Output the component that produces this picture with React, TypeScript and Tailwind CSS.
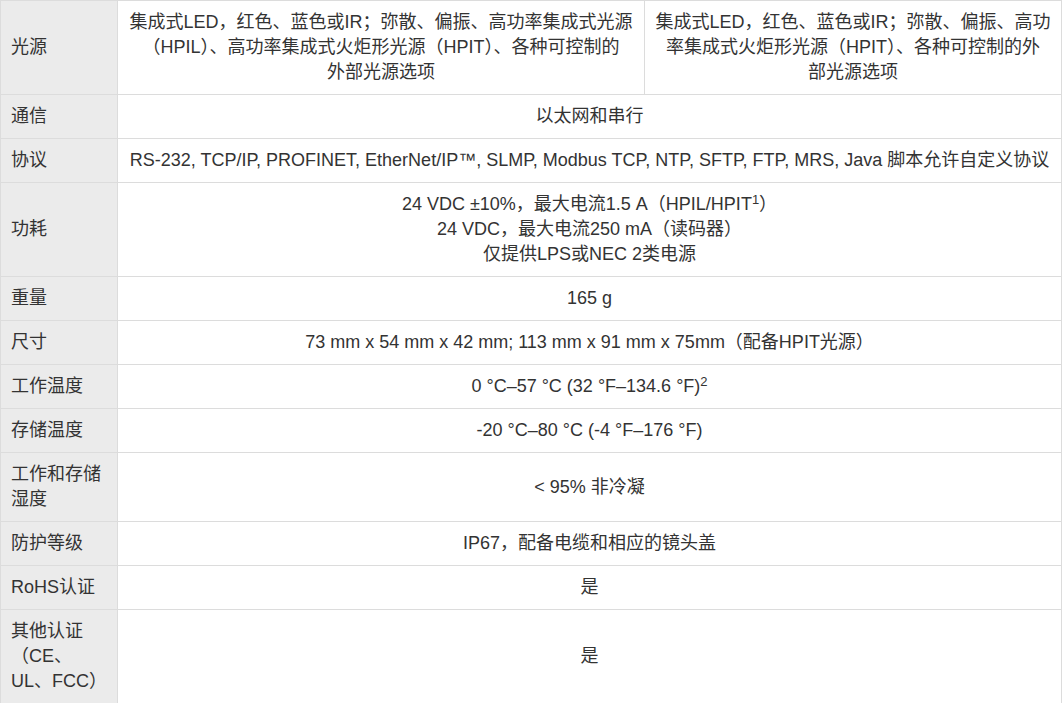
const ROWS: { label: React.ReactNode; value: React.ReactNode }[] = [
  { label: '通信', value: '以太网和串行' },
  {
    label: '协议',
    value: 'RS-232, TCP/IP, PROFINET, EtherNet/IP™, SLMP, Modbus TCP, NTP, SFTP, FTP, MRS, Java 脚本允许自定义协议',
  },
  {
    label: '功耗',
    value: (
      <>
        24 VDC ±10%，最大电流1.5 A（HPIL/HPIT<sup className="text-[13px]">1</sup>）
        <br />
        24 VDC，最大电流250 mA（读码器）
        <br />
        仅提供LPS或NEC 2类电源
      </>
    ),
  },
  { label: '重量', value: '165 g' },
  { label: '尺寸', value: '73 mm x 54 mm x 42 mm; 113 mm x 91 mm x 75mm（配备HPIT光源）' },
  {
    label: '工作温度',
    value: (
      <>
        0 °C–57 °C (32 °F–134.6 °F)<sup className="text-[13px]">2</sup>
      </>
    ),
  },
  { label: '存储温度', value: '-20 °C–80 °C (-4 °F–176 °F)' },
  {
    label: (
      <>
        工作和存储
        <br />
        湿度
      </>
    ),
    value: '< 95% 非冷凝',
  },
  { label: '防护等级', value: 'IP67，配备电缆和相应的镜头盖' },
  { label: 'RoHS认证', value: '是' },
  {
    label: (
      <>
        其他认证
        <br />
        （CE、
        <br />
        UL、FCC）
      </>
    ),
    value: '是',
  },
]

const labelCls = 'bg-[#ebebeb] border border-[#dcdcdc] px-[10px] py-[9px] text-left align-middle'
const valueCls = 'border border-[#dcdcdc] px-[10px] py-[9px] text-center align-middle'

export default function App() {
  return (
    <div
      className="w-[1062px] bg-white text-[18px] leading-[25px] text-[#333]"
      style={{ fontFamily: '"Liberation Sans", "Noto Sans CJK SC", sans-serif' }}
    >
      <table className="w-full border-collapse table-fixed">
        <colgroup>
          <col className="w-[117px]" />
          <col className="w-[527px]" />
          <col />
        </colgroup>
        <tbody>
          <tr>
            <td className={labelCls}>光源</td>
            <td className={valueCls}>
              集成式LED，红色、蓝色或IR；弥散、偏振、高功率集成式光源
              <br />
              （HPIL）、高功率集成式火炬形光源（HPIT）、各种可控制的
              <br />
              外部光源选项
            </td>
            <td className={valueCls}>
              集成式LED，红色、蓝色或IR；弥散、偏振、高功
              <br />
              率集成式火炬形光源（HPIT）、各种可控制的外
              <br />
              部光源选项
            </td>
          </tr>
          {ROWS.map((r, i) => (
            <tr key={i}>
              <td className={labelCls}>{r.label}</td>
              <td className={valueCls} colSpan={2}>
                {r.value}
              </td>
            </tr>
          ))}
        </tbody>
      </table>
    </div>
  )
}
